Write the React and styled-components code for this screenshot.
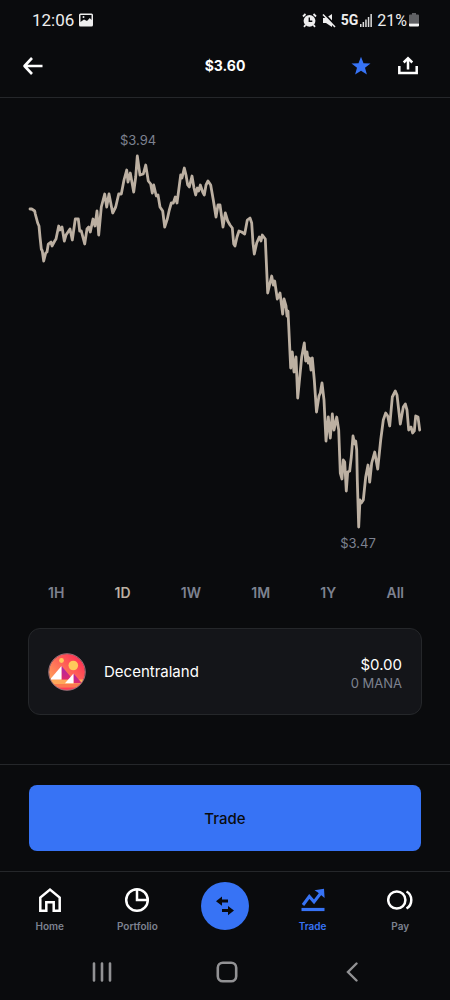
import React, { useState } from "react"
import styled, { createGlobalStyle } from "styled-components"

const GlobalStyle = createGlobalStyle`
  * {
    box-sizing: border-box;
  }
  body {
    margin: 0;
    background: #0a0b0d;
    color: #fff;
    font-family: Inter, "Liberation Sans", sans-serif;
  }
  button {
    border: 0;
    padding: 0;
    background: none;
    color: inherit;
    font-family: inherit;
    cursor: pointer;
  }
  svg {
    display: block;
    flex: none;
  }
`

const PRICES =
  "30,209 31.7,209 34.7,211 35.3,214 37.7,223 39,226 40,237 41.3,249 42.3,251 43.7,261 45.7,253 47,252 48.3,244 51,242 52,246 54.7,241 56,239 58.7,226 60,230 62,227 64.3,241 66,235 70,229 72.3,240 75.3,219 78.3,219 79.7,231 81.3,231 84.7,244 87,229 88.7,227 90.3,232 93,219 95,226 97,211 98.7,235 101.3,207 104.7,194 106.7,207 109,194 112.7,213 115.7,207 118.7,194 121.3,194 124,180 126.7,170 128,182 130.3,173 133.7,192 135.7,177 137.3,156 140,175 143.3,174 145.7,165 148.3,181 150.7,184 152.3,193 153.7,185 156.3,196 158,195 160,207 162.7,211 164.7,227 167.3,219 169.3,210 171.3,203 173.3,203 175.3,197 177,203 179,188 180.7,175 182,178 184.3,168 186,175 187.7,185 189.3,187 192,176 194,188 195.7,195 197.3,188 198.7,191 200.3,185 202.7,192 204.3,195 206,185 208,181 210.7,185 213.3,200 216,217 218,205 220,205 223,227 225.3,213 227.7,221 230,225 232.3,228 233.7,244 235,246 237,237 239,231 241.7,232 244.7,234 247.3,220 250,218 251.7,223 253,243 254.3,254 256.7,243 259.3,237 261,241 262.3,235 265.3,239 267.7,293 270,283 271.7,276 273.3,285 274.7,281 277.3,299 280,293 282.7,314 284,299 286,306 287,316 288,311 290.7,368 292.3,352 294,372 296,357 297.7,398 301.7,357 304.3,343 305.7,361 307,352 308.3,363 309.5,358 311,370 312.3,358 314.3,380 316.5,412 319,396 320.3,393 322,383 324,400 326,441 328.3,417 330.3,438 332.3,414 334,430 336.7,417 338.7,430 340.3,473 342,479 343.3,460 344.7,462 346.3,491 347.7,472 349.7,471 351.3,457 353,436 354.7,444 355.7,441 356.7,450 357.3,480 358.7,527 360,500 361.3,503 363.3,500 365.7,477 368,465 369.7,482 371.7,463 374.7,452 377.7,469 380.7,440 383.3,420 385.7,413 387.7,416 389.7,426 392.3,397 395.3,391 397,395 400.3,424 403.3,407 405.3,404 407,410 408.7,430 411,427 412.7,433 414.3,431 415.7,416 418,417 419.7,430"

const RANGES = ["1H", "1D", "1W", "1M", "1Y", "All"]

const StatusBar = () => (
  <Status>
    <StatusGroup>
      <Clock>12:06</Clock>
      <svg width="14" height="14" viewBox="0 0 14 14">
        <rect width="14" height="13" y="0.5" rx="1.5" fill="#eee" />
        <path d="M1.5 2h11v5L10.8 5 8 8 5 6.5 1.5 9z" fill="#0a0b0d" />
        <circle cx="4.5" cy="4" r="1" fill="#eee" />
      </svg>
    </StatusGroup>
    <StatusGroup>
      <svg width="15" height="15" viewBox="0 0 15 15" fill="none">
        <circle cx="7.5" cy="7.8" r="5.9" fill="#eee" />
        <path d="M1 3.5 3.5 1M14 3.5 11.5 1M3.5 12 2 13.8M11.5 12l1.5 1.8" stroke="#eee" strokeWidth="1.8" />
        <path d="M7.3 4.5v3.7h3" stroke="#0a0b0d" strokeWidth="1.4" />
      </svg>
      <svg width="14" height="15" viewBox="0 0 14 15">
        <path d="M1 5h3l6-4v13L4 10H1z" fill="#eee" />
        <path d="M2 0.5 14 13" stroke="#0a0b0d" strokeWidth="2" />
        <path d="M1 1.5 13 14" stroke="#eee" strokeWidth="1.5" />
      </svg>
      <Network>
        5G
        <svg width="12" height="13" viewBox="0 0 12 13" fill="#ddd">
          <path d="M0 10h1.5v3H0zM2.6 8h1.5v5H2.6zM5.2 5.5h1.5V13H5.2zM7.8 3h1.5v10H7.8zM10.4 0h1.5v13h-1.5z" />
        </svg>
      </Network>
      <Battery>
        21%
        <svg width="10" height="14" viewBox="0 0 10 14">
          <path d="M3 0h4v1.5h2a1 1 0 0 1 1 1V10.5H0V2.5a1 1 0 0 1 1-1h2z" fill="#606164" />
          <path d="M0 10.5h10v2a1 1 0 0 1-1 1H1a1 1 0 0 1-1-1z" fill="#f5f5f5" />
        </svg>
      </Battery>
    </StatusGroup>
  </Status>
)

const Chart = () => (
  <ChartArea viewBox="0 98 450 470" role="img" aria-label="Price over one day">
    <ChartLabel x="138" y="145">
      $3.94
    </ChartLabel>
    <polyline
      points={PRICES}
      fill="none"
      stroke="#bcb0a2"
      strokeWidth="2.8"
      strokeLinejoin="round"
      strokeLinecap="round"
    />
    <ChartLabel x="358" y="548">
      $3.47
    </ChartLabel>
  </ChartArea>
)

const ManaLogo = () => (
  <svg width="38" height="38" viewBox="0 0 38 38">
    <defs>
      <linearGradient id="sky" x1="1" y1="0" x2="0" y2="1">
        <stop offset="0.2" stopColor="#ff3b55" />
        <stop offset="1" stopColor="#ffbc5b" />
      </linearGradient>
      <linearGradient id="side" x1="0" y1="0" x2="0" y2="1">
        <stop offset="0" stopColor="#a524b3" />
        <stop offset="1" stopColor="#e02a6c" />
      </linearGradient>
      <clipPath id="disc">
        <circle cx="19" cy="19" r="18" />
      </clipPath>
    </defs>
    <g clipPath="url(#disc)">
      <rect width="38" height="38" fill="url(#sky)" />
      <path d="M0 26.5h38V31H0z" fill="#ffa85a" />
      <path d="M0 31h38v3.5H0z" fill="#fc7a4f" />
      <path d="M0 34.5h38V38H0z" fill="#ff3d56" />
      <path d="M13.5 13v13.5H25z" fill="url(#side)" />
      <path d="M13.5 13v13.5H2z" fill="#fff" />
      <path d="M25.5 20.5v9.7H34z" fill="url(#side)" />
      <path d="M25.5 20.5v9.7H17z" fill="#fff" />
      <circle cx="13.5" cy="7.5" r="2.4" fill="#ffc95b" />
      <circle cx="25.3" cy="12.5" r="4.8" fill="#ffc95b" />
    </g>
    <circle cx="19" cy="19" r="18.3" fill="none" stroke="#a0717b" strokeWidth="1" />
  </svg>
)

const HomeIcon = () => (
  <svg width="26" height="26" viewBox="0 0 26 26" fill="none" stroke="currentColor" strokeWidth="2.5">
    <path d="M3.3 23.8V10.5L13 2.6l9.7 7.9v13.3h-6v-8.6H9.3v8.6z" />
  </svg>
)

const PortfolioIcon = () => (
  <svg width="26" height="26" viewBox="0 0 26 26" fill="none" stroke="currentColor" strokeWidth="2.5">
    <circle cx="13" cy="13" r="10.8" />
    <path d="M13 2v11h11" />
  </svg>
)

const TradeIcon = () => (
  <svg width="26" height="26" viewBox="0 0 26 26" fill="none" stroke="currentColor">
    <path d="M3 18 9.3 9.5l4.7 5.3 6.5-8.3" strokeWidth="3" />
    <path d="M14.5 3.2 24 1.8l.6 9.2-3-2.6-4-3.2z" fill="currentColor" stroke="none" />
    <path d="M1.5 22.5h23" strokeWidth="3.2" />
  </svg>
)

const PayIcon = () => (
  <svg width="26" height="26" viewBox="0 0 26 26" fill="none" stroke="currentColor" strokeWidth="2.5">
    <circle cx="9.8" cy="13" r="8.6" />
    <path d="M19.5 4.5c6.4 3.5 6.4 13.5 0 17" />
  </svg>
)

const App = () => {
  const [range, setRange] = useState("1D")

  return (
    <React.Fragment>
      <GlobalStyle />
      <StatusBar />
      <Header>
        <HeaderSide>
          <button aria-label="Back">
            <svg width="22" height="20" viewBox="0 0 22 20" fill="none" stroke="#fff" strokeWidth="2.6">
              <path d="M10 2 2.5 10l7.5 8M2.5 10h18" strokeLinejoin="round" />
            </svg>
          </button>
        </HeaderSide>
        <Title>$3.60</Title>
        <HeaderSide $end>
          <button aria-label="Favorite">
            <svg width="20" height="20" viewBox="0 0 20 20" fill="#3773f5">
              <path d="M10 .8l2.5 6.4 7 .3-5.500 4.300 1.900 6.700L10 14.700l-5.900 3.800L6 11.800.5 7.500l7-.3z" />
            </svg>
          </button>
          <button aria-label="Share">
            <svg width="20" height="20" viewBox="0 0 20 20" fill="none" stroke="#fff" strokeWidth="2.5">
              <path d="M1.3 10v7h17.4v-7M10 13.5V3M5.7 6.5 10 2.2l4.3 4.3" />
            </svg>
          </button>
        </HeaderSide>
      </Header>

      <Chart />

      <Ranges>
        {RANGES.map(name => (
          <RangeButton
            key={name}
            $active={name === range}
            aria-pressed={name === range}
            onClick={() => setRange(name)}
          >
            {name}
          </RangeButton>
        ))}
      </Ranges>

      <Wallet>
        <ManaLogo />
        <WalletName>Decentraland</WalletName>
        <Balance>
          <div>$0.00</div>
          <span>0 MANA</span>
        </Balance>
      </Wallet>

      <Footer>
        <TradeButton>Trade</TradeButton>
      </Footer>

      <Nav>
        <NavItem href="#home">
          <HomeIcon />
          <span>Home</span>
        </NavItem>
        <NavItem href="#portfolio">
          <PortfolioIcon />
          <span>Portfolio</span>
        </NavItem>
        <Swap aria-label="Convert">
          <svg width="20" height="20" viewBox="0 0 20 20" fill="#0a0b0d">
            <path d="M1 5.2 7 .6v3h6v3H7v3.2zM19 14.6l-6-4.600v3H7v3h6v3.200z" />
          </svg>
        </Swap>
        <NavItem href="#trade" $active>
          <TradeIcon />
          <span>Trade</span>
        </NavItem>
        <NavItem href="#pay">
          <PayIcon />
          <span>Pay</span>
        </NavItem>
      </Nav>

      <SystemBar>
        <button aria-label="Recent apps">
          <svg width="20" height="20" viewBox="0 0 20 20" stroke="#929294" strokeWidth="2.6" strokeLinecap="round">
            <path d="M2 1.5v17M10 1.5v17M18 1.5v17" />
          </svg>
        </button>
        <button aria-label="Home screen">
          <svg width="22" height="22" viewBox="0 0 22 22" fill="none" stroke="#929294" strokeWidth="2.6">
            <rect x="1.8" y="1.8" width="18.4" height="18.4" rx="5" />
          </svg>
        </button>
        <button aria-label="Go back">
          <svg width="12" height="20" viewBox="0 0 12 20" fill="none" stroke="#929294" strokeWidth="2.4" strokeLinecap="round">
            <path d="M10.5 1.5 2 10l8.5 8.5" />
          </svg>
        </button>
      </SystemBar>
    </React.Fragment>
  )
}

const Status = styled.div`
  display: flex;
  justify-content: space-between;
  align-items: center;
  height: 40px;
  padding: 0 31px 0 32px;
  color: #eee;
  font-family: Roboto, "Liberation Sans", sans-serif;
`

const StatusGroup = styled.div`
  display: flex;
  align-items: center;
  gap: 5px;
`

const Clock = styled.span`
  font-size: 17px;
`

const Network = styled.span`
  display: flex;
  align-items: center;
  gap: 2px;
  font-size: 14px;
  font-weight: 700;
`

const Battery = styled.span`
  display: flex;
  align-items: center;
  gap: 2px;
  font-size: 16px;
`

const Header = styled.header`
  display: grid;
  grid-template-columns: 1fr auto 1fr;
  align-items: center;
  height: 58px;
  padding: 0 22px 6px;
  border-bottom: 1px solid #25272a;
`

const HeaderSide = styled.div`
  display: flex;
  gap: 27px;
  justify-content: ${props => (props.$end ? "flex-end" : "flex-start")};
  padding-right: ${props => (props.$end ? "10px" : "0")};
`

const Title = styled.h1`
  margin: 0;
  font-size: 14px;
  line-height: 20px;
  font-weight: 700;
`

const ChartArea = styled.svg`
  width: 100%;
`

const ChartLabel = styled.text`
  fill: #7d8290;
  font-size: 13px;
  text-anchor: middle;
`

const Ranges = styled.div`
  display: flex;
  justify-content: space-between;
  padding: 15px 46px 0 48px;
`

const RangeButton = styled.button`
  color: ${props => (props.$active ? "#bcb0a2" : "#7d8290")};
  font-size: 14px;
  line-height: 20px;
  font-weight: 600;
`

const Wallet = styled.section`
  display: flex;
  align-items: center;
  height: 87px;
  margin: 25px 28px 49px;
  padding: 0 19px;
  border: 1px solid #25272a;
  border-radius: 12px;
  background: #141519;
`

const WalletName = styled.div`
  flex: 1;
  padding-left: 18px;
  font-size: 15px;
  line-height: 20px;
`

const Balance = styled.div`
  padding-top: 4px;
  text-align: right;
  font-size: 15px;
  line-height: 18px;
  span {
    display: block;
    color: #7d8290;
    font-size: 13px;
  }
`

const Footer = styled.div`
  padding: 20px 29px;
  border-top: 1px solid #25272a;
`

const TradeButton = styled.button`
  display: block;
  width: 100%;
  height: 66px;
  border-radius: 8px;
  background: #3773f5;
  color: #0a0b0d;
  font-size: 15px;
  font-weight: 500;
`

const Nav = styled.nav`
  display: grid;
  grid-template-columns: repeat(5, 1fr);
  justify-items: center;
  align-items: start;
  height: 70px;
  padding: 10px 6px 0;
  border-top: 1px solid #25272a;
`

const NavItem = styled.a`
  display: flex;
  flex-direction: column;
  align-items: center;
  gap: 7px;
  padding-top: 5px;
  color: ${props => (props.$active ? "#3773f5" : "#fff")};
  text-decoration: none;
  span {
    color: ${props => (props.$active ? "#3773f5" : "#7d8290")};
    font-size: 10px;
    line-height: 12px;
    font-weight: 600;
  }
`

const Swap = styled.button`
  display: flex;
  align-items: center;
  justify-content: center;
  width: 48px;
  height: 48px;
  border-radius: 50%;
  background: #3773f5;
`

const SystemBar = styled.div`
  display: grid;
  grid-template-columns: repeat(3, 1fr);
  justify-items: center;
  align-items: center;
  height: 59px;
  padding: 2px 36px 0 39px;
`

export default App
